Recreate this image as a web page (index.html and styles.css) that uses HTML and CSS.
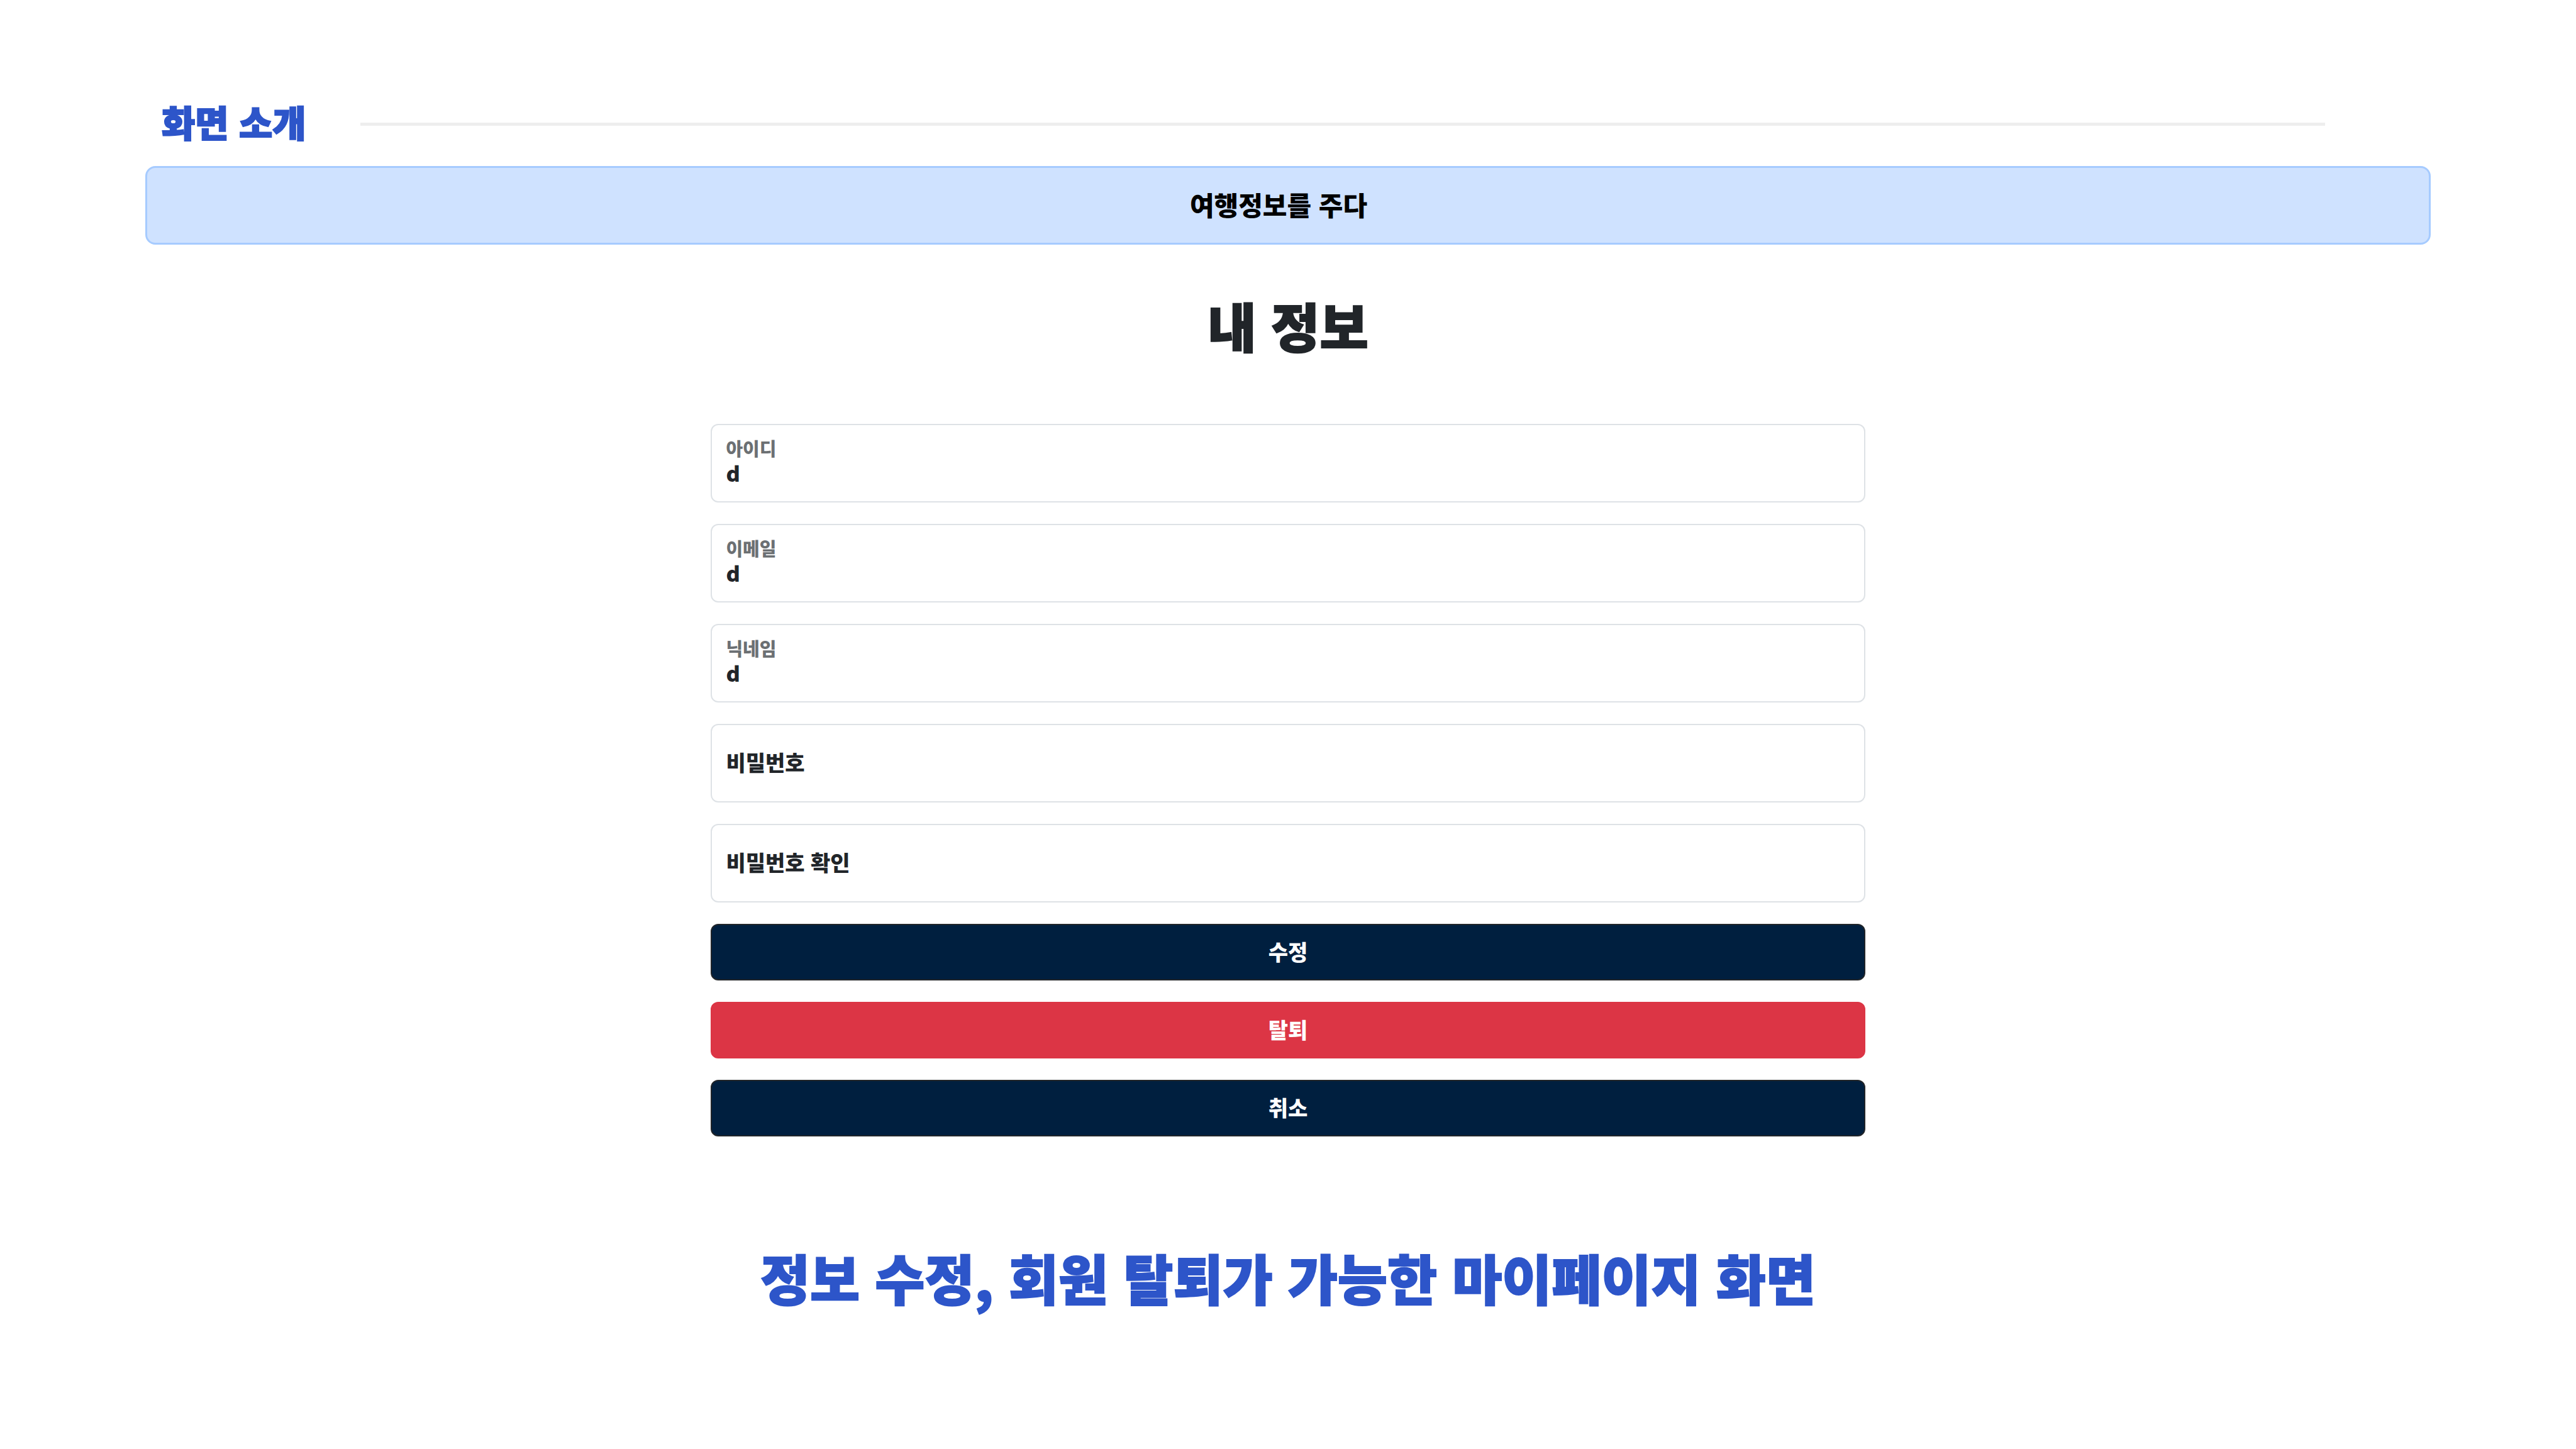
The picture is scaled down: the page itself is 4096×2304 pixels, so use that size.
FILE: index.html
```html
<!DOCTYPE html>
<html lang="ko">
<head>
<meta charset="utf-8">
<title>내 정보</title>
<link rel="stylesheet" href="styles.css">
</head>
<body>
<header class="intro">
  <h2 class="intro-title">화면 소개</h2>
  <hr class="intro-line">
</header>
<main class="page">
  <div class="banner">여행정보를 주다</div>
  <h1 class="heading">내 정보</h1>
  <form class="form">
    <div class="field">
      <label class="field-label" for="user-id">아이디</label>
      <input class="field-input" id="user-id" type="text" value="d">
    </div>
    <div class="field">
      <label class="field-label" for="email">이메일</label>
      <input class="field-input" id="email" type="text" value="d">
    </div>
    <div class="field">
      <label class="field-label" for="nickname">닉네임</label>
      <input class="field-input" id="nickname" type="text" value="d">
    </div>
    <div class="field field-empty">
      <label class="field-label" for="password">비밀번호</label>
      <input class="field-input" id="password" type="password">
    </div>
    <div class="field field-empty">
      <label class="field-label" for="password-check">비밀번호 확인</label>
      <input class="field-input" id="password-check" type="password">
    </div>
    <button class="button" type="button">수정</button>
    <button class="button button-danger" type="button">탈퇴</button>
    <button class="button" type="button">취소</button>
  </form>
</main>
<p class="caption">정보 수정, 회원 탈퇴가 가능한 마이페이지 화면</p>
</body>
</html>
```
FILE: styles.css
```css
* {
  box-sizing: border-box;
}

body {
  margin: 0;
  padding: 150px 231px 0;
  background: #fff;
  color: #212529;
  font-family: "Noto Sans CJK KR", sans-serif;
  font-weight: 900;
}

.intro {
  display: flex;
  align-items: center;
  gap: 86px;
  height: 94px;
  margin-bottom: 20px;
  padding: 0 168px 0 26px;
}

.intro-title {
  margin: 0;
  padding-bottom: 8px;
  color: #2d55c9;
  font-size: 58px;
  font-weight: 900;
  line-height: 84px;
  -webkit-text-stroke: 2px currentColor;
}

.intro-line {
  flex: 1;
  height: 5px;
  margin: 0;
  border: 0;
  background: #eee;
}

.banner {
  padding: 28px 30px 31px 0;
  border: 3px solid #a6cbff;
  border-radius: 16px;
  background: #cfe2ff;
  color: #000;
  font-size: 42px;
  line-height: 60px;
  text-align: center;
}

.heading {
  margin: 68px 0 97px;
  font-size: 84px;
  font-weight: 900;
  line-height: 120px;
  text-align: center;
  -webkit-text-stroke: 2px currentColor;
}

.form {
  display: flex;
  flex-direction: column;
  gap: 34px;
  width: 50.5%;
  margin: 0 auto;
}

.field {
  display: flex;
  flex-direction: column;
  height: 125px;
  padding: 16px 22px 0;
  border: 2px solid #dee2e6;
  border-radius: 12px;
  background: #fff;
}

.field-label {
  color: #6c7073;
  font-size: 29px;
  line-height: 40px;
}

.field-input {
  min-width: 0;
  padding: 0;
  border: 0;
  outline: 0;
  background: none;
  color: #212529;
  font: inherit;
  font-size: 34px;
  line-height: 40px;
}

.field-empty {
  flex-direction: row;
  align-items: center;
  gap: 24px;
  padding: 0 22px 4px;
}

.field-empty .field-label {
  color: #212529;
  font-size: 34px;
}

.field-empty .field-input {
  flex: 1;
}

.button {
  height: 90px;
  padding: 0 24px 2px;
  border: 2px solid #212529;
  border-radius: 12px;
  background: #001f3f;
  color: #fff;
  font: inherit;
  font-size: 34px;
  line-height: 48px;
}

.button-danger {
  border-color: #dc3545;
  background: #dc3545;
}

.caption {
  margin: 160px 0 0;
  color: #2d55c9;
  font-size: 86px;
  line-height: 128px;
  text-align: center;
  -webkit-text-stroke: 2px currentColor;
}
```
